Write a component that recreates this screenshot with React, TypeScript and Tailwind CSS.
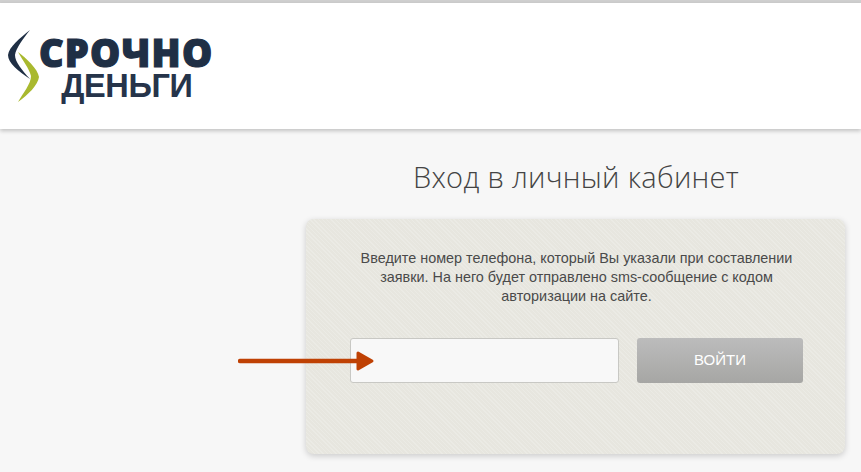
import React from 'react';

const Logo = () => (
  <div className="flex items-start pl-[8px] pt-[26px]">
    <svg width="34" height="76" viewBox="0 0 34 76" className="shrink-0">
      <path d="M22 1 C12 9 1 18 0 26 C0 34 10 42 22 50 C14 41 7 33 7 26 C8 19 15 10 22 1 Z" fill="#1f2f45" />
      <path d="M10 23 C18 29 30 40 31 48 C30 56 20 66 10 73 C15 64 23 55 23 47 C21 39 15 32 10 23 Z" fill="#a9b92f" />
    </svg>
    <div className="ml-[-3px] flex flex-col items-end font-['Open_Sans',sans-serif] font-extrabold text-[#1f2f45]">
      <span className="mt-[6px] text-[38px] leading-[34px] tracking-[1.2px] [-webkit-text-stroke:1.2px_#1f2f45]">СРОЧНО</span>
      <span className="mr-[21px] font-['Liberation_Sans',sans-serif] text-[32.5px] font-bold leading-[34px] tracking-[-0.4px] text-[#26344a]">ДЕНЬГИ</span>
    </div>
  </div>
);

const Arrow = () => (
  <svg width="138" height="24" viewBox="0 0 138 24" className="absolute left-[-112px] top-[11px]">
    <path d="M2 12 L122 12" stroke="#bf4104" strokeWidth="4.5" strokeLinecap="round" />
    <path d="M120 9 L120 4 L134 12 L120 20 L120 15 Z" fill="#bf4104" stroke="#bf4104" strokeWidth="3" strokeLinejoin="round" />
  </svg>
);

export default function App() {
  return (
    <div className="h-[472px] w-[861px] overflow-hidden bg-[#f7f7f7] font-['Liberation_Sans',sans-serif]">
      <div className="h-[3px] bg-[#cfcfcf]" />
      <header className="h-[126px] bg-white shadow-[0_2px_4px_rgba(0,0,0,0.22)]">
        <Logo />
      </header>
      <main className="flex flex-col items-start">
        <h1 className="ml-[306px] mt-[26px] w-[540px] text-center font-['Open_Sans',sans-serif] text-[29px] font-light leading-[44px] tracking-[0.3px] text-[#444444]">
          Вход в личный кабинет
        </h1>
        <section className="ml-[306px] mt-[20px] h-[235px] w-[539px] rounded-[8px] bg-[#e7e6df] bg-[repeating-linear-gradient(45deg,rgba(255,255,255,0.18)_0,rgba(255,255,255,0.18)_1px,transparent_1px,transparent_3px)] pl-[44px] pr-[42px] pt-[30px] shadow-[0_2px_6px_rgba(0,0,0,0.18)]">
          <p className="text-center text-[14.4px] leading-[19px] text-[#4a4a4a]">
            Введите номер телефона, который Вы указали при составлении
            <br />
            заявки. На него будет отправлено sms-сообщение с кодом
            <br />
            авторизации на сайте.
          </p>
          <div className="mt-[32px] flex gap-[18px]">
            <div className="relative">
              <input
                type="text"
                className="block h-[45px] w-[269px] rounded-[3px] border border-[#c8c8c4] bg-[#f8f8f8] outline-none"
              />
              <Arrow />
            </div>
            <button className="h-[45px] w-[166px] rounded-[3px] bg-gradient-to-b from-[#bcbcbc] to-[#a6a6a4] text-[15px] text-white">
              ВОЙТИ
            </button>
          </div>
        </section>
      </main>
    </div>
  );
}
